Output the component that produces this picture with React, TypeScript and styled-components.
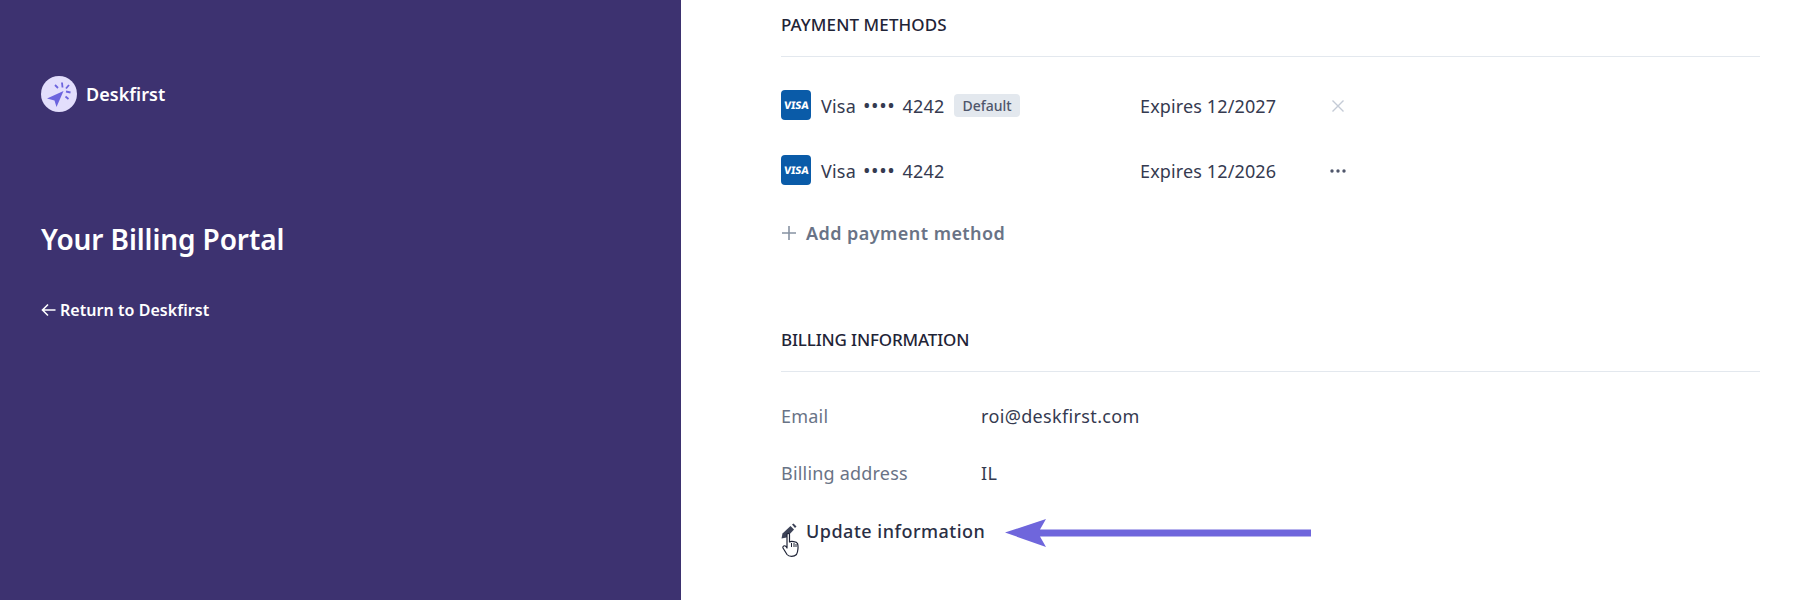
import React from "react";
import styled, { createGlobalStyle } from "styled-components";

const Global = createGlobalStyle`
  html, body { margin: 0; padding: 0; background: #fff; overflow: hidden; }
  body { font-family: "Noto Sans", "Open Sans", "Liberation Sans", sans-serif; color: #252b42; }
`;
const Page = styled.div`
  position: relative;
  display: grid;
  grid-template-columns: 681px 1fr;
  height: 600px;
  overflow: hidden;
`;
const Sidebar = styled.aside`
  background: #3d3270;
  color: #fff;
  padding: 76px 41px 0;
  display: flex;
  flex-direction: column;
  align-items: flex-start;
`;
const Brand = styled.div`
  display: flex;
  align-items: center;
  gap: 9px;
  font-size: 18px;
  line-height: 36px;
  font-weight: 600;
  letter-spacing: 0.05px;
`;
const PortalTitle = styled.h1`
  margin: 107px 0 0;
  font-size: 28px;
  line-height: 40px;
  font-weight: 600;
  letter-spacing: -0.1px;
`;
const BackLink = styled.a`
  margin-top: 39px;
  display: flex;
  align-items: center;
  gap: 4px;
  font-size: 16px;
  line-height: 24px;
  font-weight: 600;
  letter-spacing: 0.05px;
  color: #fff;
`;
const Main = styled.main`
  padding: 12px 38px 0 100px;
`;
const SectionTitle = styled.h2<{ $spaced?: boolean }>`
  margin: ${(p) => (p.$spaced ? "80px" : "0")} 0 0;
  padding-bottom: 18px;
  border-bottom: 1px solid #e3e8ee;
  font-size: 17px;
  line-height: 26px;
  font-weight: 500;
  letter-spacing: ${(p) => (p.$spaced ? "-0.15px" : "0.1px")};
  color: #1f2437;
`;
const Methods = styled.div`
  margin-top: 33px;
  display: flex;
  flex-direction: column;
  gap: 35px;
`;
const MethodRow = styled.div`
  display: flex;
  align-items: center;
  height: 30px;
`;
const CardName = styled.div`
  width: 319px;
  display: flex;
  align-items: center;
  margin-left: 10px;
  padding-top: 1px;
  font-size: 18px;
  letter-spacing: 0.2px;
  color: #353a50;
`;
const Bullets = styled.span`
  margin: 0 7px;
  font-size: 20px;
  line-height: 20px;
  letter-spacing: 0.6px;
`;
const Badge = styled.span`
  margin-left: 10px;
  padding: 0 8px;
  height: 23px;
  line-height: 23px;
  border-radius: 4px;
  background: #e3e8ee;
  color: #4f566b;
  font-size: 14px;
  font-weight: 500;
  letter-spacing: 0;
`;
const Expiry = styled.div`
  width: 186px;
  padding-top: 1px;
  font-size: 18px;
  letter-spacing: 0.13px;
  color: #353a50;
`;
const ActionIcon = styled.span`
  display: flex;
  width: 24px;
  justify-content: center;
  padding-top: 1px;
`;
const ActionLink = styled.a<{ $muted?: boolean }>`
  display: flex;
  align-items: center;
  gap: 9px;
  font-size: 18px;
  line-height: 28px;
  font-weight: ${(p) => (p.$muted ? 600 : 500)};
  letter-spacing: ${(p) => (p.$muted ? "0.45px" : "0.5px")};
  color: ${(p) => (p.$muted ? "#697386" : "#2a2f45")};
`;
const AddWrap = styled.div`
  margin-top: 34px;
`;
const InfoGrid = styled.dl`
  margin: 30px 0 0;
  display: grid;
  grid-template-columns: 200px 1fr;
  row-gap: 29px;
  font-size: 18px;
  line-height: 28px;
`;
const InfoLabel = styled.dt`
  color: #697386;
  letter-spacing: 0.2px;
`;
const InfoValue = styled.dd`
  margin: 0;
  color: #353a50;
  letter-spacing: 0.35px;
`;
const UpdateWrap = styled.div`
  margin-top: 30px;
`;
const PointerOverlay = styled.svg`
  position: absolute;
  left: 782px;
  top: 532px;
`;
const ArrowOverlay = styled.svg`
  position: absolute;
  left: 1004px;
  top: 518px;
`;

const Logo = () => (
  <svg width="36" height="36" viewBox="0 0 36 36" aria-hidden="true">
    <circle cx="18" cy="18" r="18" fill="#e3defc" />
    <path d="M6 22.5 L22.5 15 L15.5 31 L13.5 24.5 Z" fill="#6c63de" />
    <g stroke="#6c63de" strokeWidth="1.8" strokeLinecap="butt">
      <path d="M14 9 L17 12" />
      <path d="M21 6.5 L21.5 11.5" />
      <path d="M28 9 L25 12.5" />
      <path d="M25 15.5 L29.5 16.5" />
      <path d="M24.5 20.5 L27.5 23" />
    </g>
  </svg>
);

const VisaIcon = () => (
  <svg width="30" height="30" viewBox="0 0 30 30" aria-hidden="true">
    <rect width="30" height="30" rx="4" fill="#0a5ba8" />
    <text x="16" y="19" textAnchor="middle" transform="skewX(-6) translate(1 0)" fontFamily="Noto Sans, sans-serif" fontSize="10.5" fontWeight="800" fill="#fff">VISA</text>
  </svg>
);

export default function App() {
  return (
    <Page>
      <Global />
      <Sidebar>
        <Brand><Logo />Deskfirst</Brand>
        <PortalTitle>Your Billing Portal</PortalTitle>
        <BackLink>
          <svg width="15" height="14" viewBox="0 0 15 14" fill="none" stroke="#fff" strokeWidth="1.6" aria-hidden="true">
            <path d="M14.5 7H1.5M7 1.5L1.5 7L7 12.5" />
          </svg>
          Return to Deskfirst
        </BackLink>
      </Sidebar>
      <Main>
        <SectionTitle>PAYMENT METHODS</SectionTitle>
        <Methods>
          <MethodRow>
            <VisaIcon />
            <CardName>Visa<Bullets>••••</Bullets>4242<Badge>Default</Badge></CardName>
            <Expiry>Expires 12/2027</Expiry>
            <ActionIcon>
              <svg width="14" height="14" viewBox="0 0 14 14" stroke="#c4cbd6" strokeWidth="1.4" aria-hidden="true"><path d="M1.5 1.5L12.5 12.5M12.5 1.5L1.5 12.5" /></svg>
            </ActionIcon>
          </MethodRow>
          <MethodRow>
            <VisaIcon />
            <CardName>Visa<Bullets>••••</Bullets>4242</CardName>
            <Expiry>Expires 12/2026</Expiry>
            <ActionIcon>
              <svg width="16" height="4" viewBox="0 0 16 4" fill="#4f566b" aria-hidden="true"><circle cx="2" cy="2" r="1.7" /><circle cx="8" cy="2" r="1.7" /><circle cx="14" cy="2" r="1.7" /></svg>
            </ActionIcon>
          </MethodRow>
        </Methods>
        <AddWrap>
          <ActionLink $muted>
            <svg width="16" height="16" viewBox="0 0 16 16" stroke="#8792a2" strokeWidth="1.6" aria-hidden="true"><path d="M8 1V15M1 8H15" /></svg>
            Add payment method
          </ActionLink>
        </AddWrap>
        <SectionTitle $spaced>BILLING INFORMATION</SectionTitle>
        <InfoGrid>
          <InfoLabel>Email</InfoLabel>
          <InfoValue>roi@deskfirst.com</InfoValue>
          <InfoLabel>Billing address</InfoLabel>
          <InfoValue>IL</InfoValue>
        </InfoGrid>
        <UpdateWrap>
          <ActionLink>
            <svg width="16" height="16" viewBox="0 0 16 16" fill="#3c4257" aria-hidden="true"><path d="M0.5 15.5L1.5 10.5L9.5 3L13 6.5L5.5 14.5Z" /><path d="M11 1.5L12.5 0.5L15.5 3.5L14 5Z" /></svg>
            Update information
          </ActionLink>
        </UpdateWrap>
      </Main>
      <PointerOverlay width="18" height="26" viewBox="0 0 18 26" aria-hidden="true">
        <path d="M5 2.5C5 1 7.5 1 7.5 2.5V10C9 9 14.5 9.5 15.5 11.5C16.5 14 16 20 14.5 22.5C12 25 7 25 5 22.5L1 16C0.5 14 2.5 13 4 14.5L5 16Z" fill="#fff" stroke="#1f2437" strokeWidth="1.2" strokeLinejoin="round" />
        <path d="M9.5 11V15M12 11V15M14 12V15" stroke="#1f2437" strokeWidth="1" />
      </PointerOverlay>
      <ArrowOverlay width="308" height="30" viewBox="0 0 308 30" aria-hidden="true">
        <path d="M1 14.5L42 1L36 11.5H307V18.5H36L42 29Z" fill="#6f66dc" />
      </ArrowOverlay>
    </Page>
  );
}
